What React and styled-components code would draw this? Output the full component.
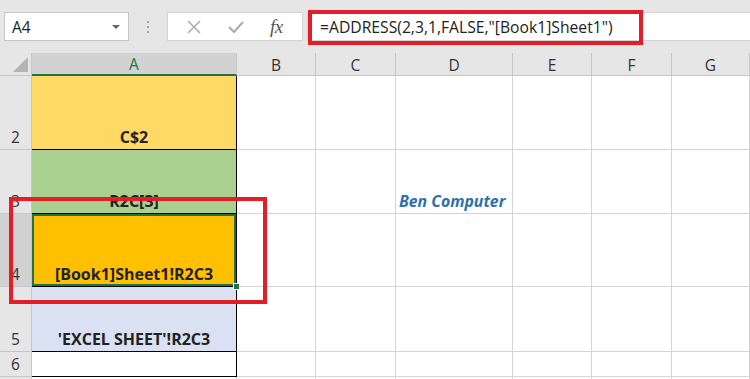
import React from "react";
import styled, { createGlobalStyle } from "styled-components";

const Global = createGlobalStyle`
  html, body { margin: 0; padding: 0; background: #ffffff; overflow: hidden; }
  body { font-family: "Open Sans", "Noto Sans", Arial, sans-serif; }
  * { box-sizing: border-box; }
`;

const Page = styled.div`
  position: relative;
  width: 750px;
  height: 379px;
  overflow: hidden;
  background: #ffffff;
`;

const Toolbar = styled.div`
  height: 53px;
  background: #e6e6e6;
  display: flex;
  align-items: flex-start;
  padding: 12px 0 0 4px;
`;

const NameBox = styled.div`
  width: 125px;
  height: 29px;
  background: #fff;
  border: 1px solid #c6c6c6;
  display: flex;
  align-items: center;
  justify-content: space-between;
  padding: 0 8px 0 7px;
  font-size: 15.5px;
  color: #222;
`;

const Caret = styled.span`
  width: 0;
  height: 0;
  border-left: 4px solid transparent;
  border-right: 4px solid transparent;
  border-top: 4px solid #666;
`;

const Dots = styled.div`
  width: 38px;
  height: 29px;
  display: flex;
  flex-direction: column;
  align-items: center;
  justify-content: center;
  gap: 3px;
  & > i { display: block; width: 2px; height: 2px; background: #a6a6a6; }
`;

const FxBox = styled.div`
  width: 136px;
  height: 29px;
  background: #fff;
  border: 1px solid #d4d4d4;
  display: flex;
  align-items: center;
  justify-content: space-around;
  padding: 0 6px;
`;

const FxText = styled.span`
  font-family: "Liberation Serif", "DejaVu Serif", serif;
  font-style: italic;
  font-size: 19px;
  color: #555;
  letter-spacing: -0.5px;
`;

const Formula = styled.div`
  position: relative;
  flex: 1;
  height: 29px;
  margin-left: 4px;
  background: #fff;
  border-top: 1px solid #d4d4d4;
  border-bottom: 1px solid #d4d4d4;
  border-left: 1px solid #d4d4d4;
  display: flex;
  align-items: center;
  padding-left: 12px;
  font-size: 15.7px;
  color: #222;
  white-space: nowrap;
`;

const RedBox = styled.div`
  position: absolute;
  border: 4px solid #e31e27;
  pointer-events: none;
`;

const Grid = styled.div`
  display: grid;
  grid-template-columns: 32px 205px 79px 80px 117px 79px 80px 78px;
  grid-template-rows: 23px 74px 64px 73px 65px 25px 40px;
`;

const Corner = styled.div`
  background: #e6e6e6;
  border-right: 1px solid #c6c6c6;
  border-bottom: 1px solid #c6c6c6;
  position: relative;
  &::after {
    content: "";
    position: absolute;
    right: 3px;
    bottom: 3px;
    width: 0;
    height: 0;
    border-left: 15px solid transparent;
    border-bottom: 15px solid #b4b4b4;
  }
`;

const ColHead = styled.div`
  background: ${(p) => (p.$active ? "#d2d2d2" : "#e6e6e6")};
  border-right: 1px solid #c6c6c6;
  border-bottom: ${(p) => (p.$active ? "2px solid #217346" : "1px solid #c6c6c6")};
  color: ${(p) => (p.$active ? "#217346" : "#333")};
  font-size: 15.5px;
  display: flex;
  align-items: center;
  justify-content: center;
  padding-top: 1px;
`;

const RowHead = styled.div`
  background: ${(p) => (p.$active ? "#d2d2d2" : "#e6e6e6")};
  border-right: 1px solid #c6c6c6;
  border-bottom: 1px solid #c6c6c6;
  color: #333;
  font-size: 15.5px;
  display: flex;
  align-items: flex-end;
  justify-content: center;
  padding-bottom: 1px;
  line-height: 21px;
`;

const Cell = styled.div`
  position: relative;
  background: ${(p) => p.$bg || "#fff"};
  border-right: 1px solid ${(p) => (p.$dark ? "#000" : "#d4d4d4")};
  border-bottom: 1px solid ${(p) => (p.$dark ? "#000" : "#d4d4d4")};
  display: flex;
  align-items: flex-end;
  justify-content: center;
  padding-bottom: 1px;
  font-size: 16px;
  font-weight: 700;
  color: #222;
  line-height: 21px;
  white-space: nowrap;
  ${(p) => p.$selected && `box-shadow: inset 0 0 0 2px #217346;`}
`;

const Label = styled.span`
  position: absolute;
  left: 3px;
  bottom: 1px;
  font-style: italic;
  font-weight: 700;
  font-size: 15.8px;
  color: #2e6fae;
  line-height: 21px;
`;

const FillHandle = styled.span`
  position: absolute;
  right: -4px;
  bottom: -4px;
  width: 7px;
  height: 7px;
  background: #217346;
  border: 1px solid #fff;
  z-index: 2;
`;

const cols = ["A", "B", "C", "D", "E", "F", "G"];
const rows = [
  { n: "2", a: "C$2", bg: "#ffd966" },
  { n: "3", a: "R2C[3]", bg: "#a9d08e", label: "Ben Computer" },
  { n: "4", a: "[Book1]Sheet1!R2C3", bg: "#ffc000", sel: true },
  { n: "5", a: "'EXCEL SHEET'!R2C3", bg: "#d9e1f2" },
  { n: "6", a: "", bg: "#ffffff" },
  { n: "7", a: "", bg: "#ffffff", plain: true },
];

const XIcon = () => (
  <svg width="14" height="14" viewBox="0 0 14 14">
    <path d="M1 1 L13 13 M13 1 L1 13" stroke="#ababab" strokeWidth="1.5" fill="none" />
  </svg>
);

const CheckIcon = () => (
  <svg width="16" height="14" viewBox="0 0 16 14">
    <path d="M1 7 L6 12 L15 2" stroke="#ababab" strokeWidth="2" fill="none" />
  </svg>
);

export default function App() {
  return (
    <Page>
      <Global />
      <Toolbar>
        <NameBox>
          <span>A4</span>
          <Caret />
        </NameBox>
        <Dots>
          <i />
          <i />
          <i />
        </Dots>
        <FxBox>
          <XIcon />
          <CheckIcon />
          <FxText>fx</FxText>
        </FxBox>
        <Formula>=ADDRESS(2,3,1,FALSE,"[Book1]Sheet1")</Formula>
      </Toolbar>
      <Grid>
        <Corner />
        {cols.map((c) => (
          <ColHead key={c} $active={c === "A"}>
            {c}
          </ColHead>
        ))}
        {rows.map((r) => (
          <React.Fragment key={r.n}>
            <RowHead $active={r.sel}>{r.plain ? "" : r.n}</RowHead>
            <Cell $bg={r.bg} $dark={!r.plain} $selected={r.sel}>
              {r.a}
              {r.sel && <FillHandle />}
            </Cell>
            {cols.slice(1).map((c) => (
              <Cell key={c}>
                {c === "D" && r.label && <Label>{r.label}</Label>}
              </Cell>
            ))}
          </React.Fragment>
        ))}
      </Grid>
      <RedBox style={{ left: 308, top: 10, width: 335, height: 35 }} />
      <RedBox style={{ left: 9, top: 197, width: 258, height: 107 }} />
    </Page>
  );
}
